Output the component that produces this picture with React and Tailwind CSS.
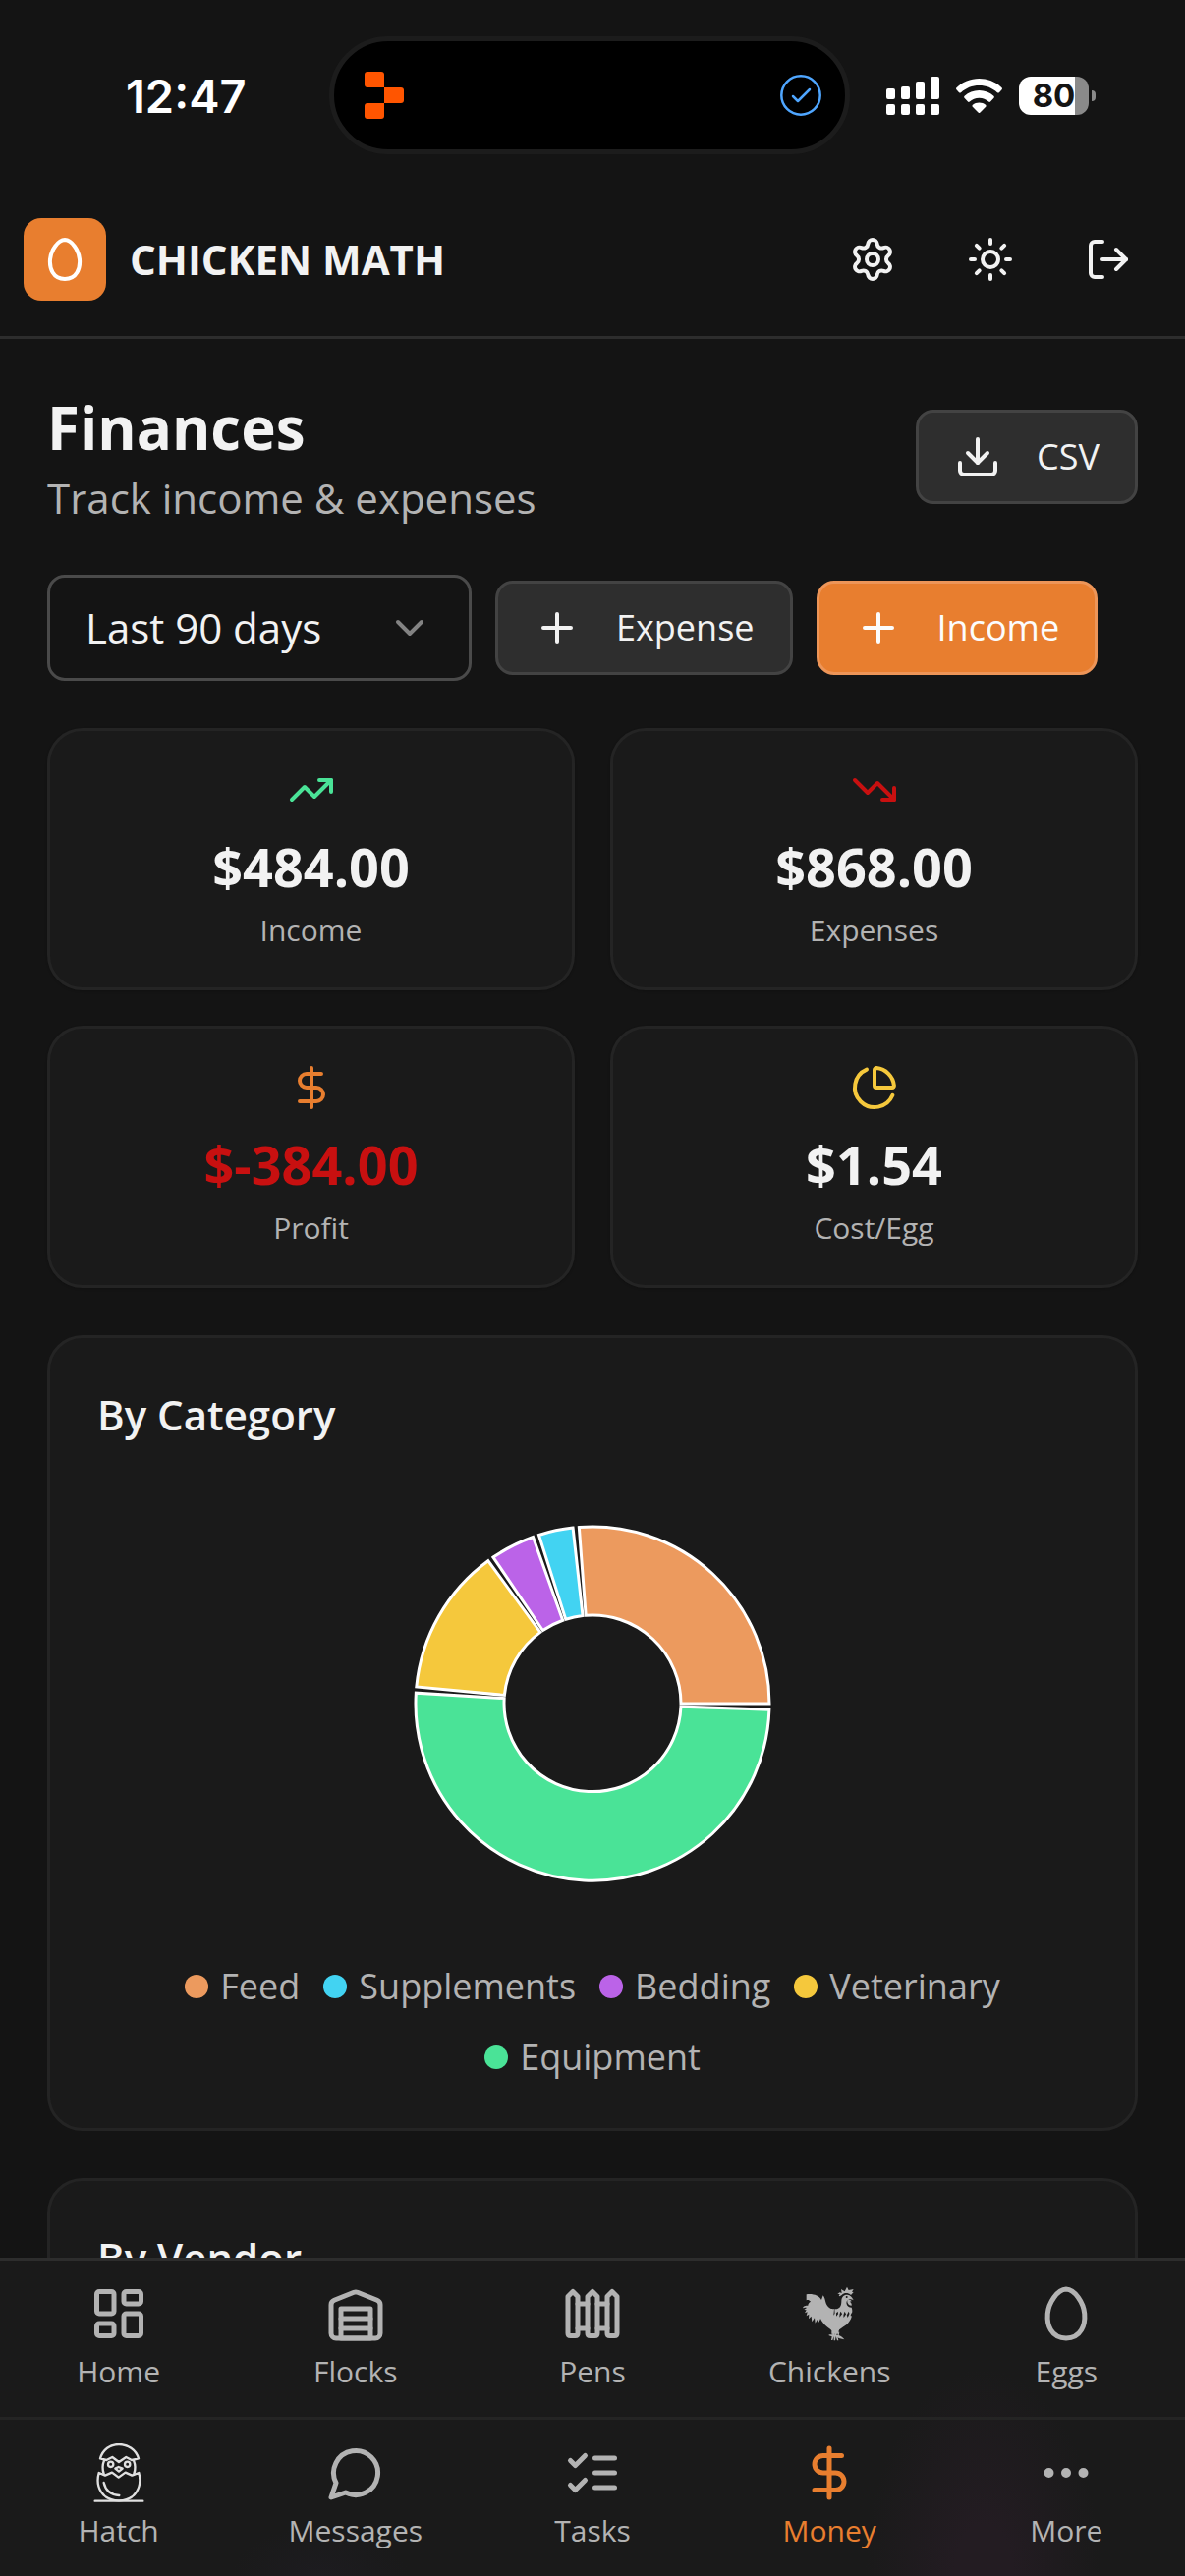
import { useState } from 'react'
import {
  ChevronDown, DollarSign, Download, Ellipsis, Fence, LayoutDashboard,
  LogOut, PieChart, Plus, Settings, Sun, TrendingDown, TrendingUp,
} from 'lucide-react'

const STATS = [
  { label: 'Income', value: '$484.00', icon: TrendingUp, iconClass: 'text-[#4ae397]', valueClass: 'text-[#f2f2f2]' },
  { label: 'Expenses', value: '$868.00', icon: TrendingDown, iconClass: 'text-[#c81010]', valueClass: 'text-[#f2f2f2]' },
  { label: 'Profit', value: '$-384.00', icon: DollarSign, iconClass: 'text-[#e87e2f]', valueClass: 'text-[#c81010]' },
  { label: 'Cost/Egg', value: '$1.54', icon: PieChart, iconClass: 'text-[#f5c83c]', valueClass: 'text-[#f2f2f2]' },
]

const CATEGORIES = [
  { name: 'Feed', amount: 234, fill: 'fill-[#ec9a5e]', dot: 'bg-[#ec9a5e]' },
  { name: 'Supplements', amount: 28, fill: 'fill-[#42d3f2]', dot: 'bg-[#42d3f2]' },
  { name: 'Bedding', amount: 36, fill: 'fill-[#bb63e8]', dot: 'bg-[#bb63e8]' },
  { name: 'Veterinary', amount: 120, fill: 'fill-[#f5c83c]', dot: 'bg-[#f5c83c]' },
  { name: 'Equipment', amount: 450, fill: 'fill-[#4ae397]', dot: 'bg-[#4ae397]' },
]

// Stroke icons that differ from the ones in the icon package
function StrokeIcon({ className, children }) {
  return (
    <svg viewBox="0 0 24 24" className={className} fill="none" stroke="currentColor" strokeWidth="2"
      strokeLinecap="round" strokeLinejoin="round" aria-hidden="true">
      {children}
    </svg>
  )
}

function EggIcon({ className }) {
  return (
    <StrokeIcon className={className}>
      <path d="M12 22c6.23-.05 7.87-5.57 7.5-10-.36-4.34-3.95-9.96-7.5-10-3.55.04-7.14 5.66-7.5 10-.37 4.43 1.27 9.95 7.5 10z" />
    </StrokeIcon>
  )
}

function WarehouseIcon({ className }) {
  return (
    <StrokeIcon className={className}>
      <path d="M22 8.35V20a2 2 0 0 1-2 2H4a2 2 0 0 1-2-2V8.35A2 2 0 0 1 3.26 6.5l8-3.2a2 2 0 0 1 1.48 0l8 3.2A2 2 0 0 1 22 8.35Z" />
      <path d="M6 18h12" />
      <path d="M6 14h12" />
      <rect width="12" height="12" x="6" y="10" />
    </StrokeIcon>
  )
}

function MessageIcon({ className }) {
  return (
    <StrokeIcon className={className}>
      <path d="M7.9 20A9 9 0 1 0 4 16.1L2 22Z" />
    </StrokeIcon>
  )
}

function TasksIcon({ className }) {
  return (
    <StrokeIcon className={className}>
      <path d="m3 17 2 2 4-4" />
      <path d="m3 7 2 2 4-4" />
      <path d="M13 6h8" />
      <path d="M13 12h8" />
      <path d="M13 18h8" />
    </StrokeIcon>
  )
}

function RoosterIcon({ className }) {
  return (
    <svg viewBox="143 135 180 180" className={className} fill="currentColor" aria-hidden="true">
      {/* comb */}
      <path d="M258 164l7-4 6 2-2-12 11 7 7-14 5 10 15-3-5 8 5 1-8 9c-9-8-20-8-28 0-4 3-6 4-9 3l3-6z" />
      {/* tail and body */}
      <path d="M163 166c20-3 38 3 46 17l5-14c9 11 5 28 19 38 5 4 12 4 15 3l-2 20 8-10 0 13 11-13-1 16 11-14 2 15 8-12 4 12 7-15 3 11 3-3c-3 16-13 27-26 35-7 5-13 8-14 12l-1 10h-21l0-10c-2-5-9-8-15-13-8-7-15-15-19-24l-5 12-3-11-8 13-2-16-8 12-2-17-8 8 1-14-8 5 3-12-8 3 5-9-7-1 8-6c-4-2-8-1-12 1 1-7 9-8 16-8 0-5 3-10 8-12-4-4-8-6-13-4z" />
      {/* head and neck */}
      <path d="M249 211c15 1 21-8 21-24 0-14 8-21 18-20 9 1 15 7 19 17-5-3-10-4-15-2-6 2-8 8-6 14 2 7 7 10 15 10 2 5 2 9 2 14l-6 10-5-12-6 12-6-12-5 13-7-13-7 12-2-12-9 9z" />
      <path d="M288 184c6-4 12-1 13 3l-6 1c5 3 7 7 6 12-8 1-14-6-13-16z" />
      <circle cx="286" cy="174" r="3" className="fill-[#1a1a1a]" />
      {/* feet */}
      <path d="M243 281h4l2 9 2-9h4l0 9h4l2-9h3l-2 10c7 3 13 7 17 13l-17-4-3-3 2 10h-4l-4-13-2 13h-4l0-13-4 12h-4l2-11-9-3v-3h11z" />
    </svg>
  )
}

function HatchIcon({ className }) {
  return (
    <svg viewBox="272 621 180 180" className={className} fill="none" stroke="currentColor" strokeWidth="7"
      strokeLinecap="round" strokeLinejoin="round" aria-hidden="true">
      {/* top of the shell */}
      <path d="M305 667c8-27 30-43 57-43s52 16 60 43l-21 5-17-9-22 15-20-15-18 9z" />
      {/* chick */}
      <path d="M317 673c-6 15-6 27-1 41M407 673c6 15 6 27 1 41" />
      <circle cx="337" cy="685" r="8" />
      <circle cx="388" cy="685" r="8" />
      <path d="M351 698l10-5 12 5-11 9z" />
      {/* lower shell and ground */}
      <path d="M301 711l19 8 21-9 20 15 21-15 20 9 21-8c11 43-11 85-61 85s-73-42-61-85z" />
      <path d="M316 741c5 23 21 37 47 39" />
      <path d="M289 797h146" />
    </svg>
  )
}

const NAV_ROWS = [
  [
    { label: 'Home', icon: LayoutDashboard },
    { label: 'Flocks', icon: WarehouseIcon },
    { label: 'Pens', icon: Fence },
    { label: 'Chickens', icon: RoosterIcon },
    { label: 'Eggs', icon: EggIcon },
  ],
  [
    { label: 'Hatch', icon: HatchIcon, iconClass: 'text-[#e0e0e0]' },
    { label: 'Messages', icon: MessageIcon },
    { label: 'Tasks', icon: TasksIcon },
    { label: 'Money', icon: DollarSign, active: true },
    { label: 'More', icon: Ellipsis },
  ],
]

function StatusBar() {
  return (
    <div className="grid h-[186px] shrink-0 grid-cols-[335fr_530fr_341fr] items-start pt-[37px]">
      <div className="flex h-[120px] items-center pl-32 font-['Inter',sans-serif] text-[47px] leading-none font-semibold text-white">
        12:47
      </div>
      <div className="flex h-[120px] items-center justify-between rounded-full border-5 border-[#1c1c1c] bg-black pr-6 pl-[31px]">
        <svg viewBox="0 0 40 48" className="h-12 w-10 fill-[#ff5500]" aria-hidden="true">
          <path d="M3 0h14a3 3 0 0 1 3 3v13H3a3 3 0 0 1-3-3V3a3 3 0 0 1 3-3z" />
          <path d="M20 16h17a3 3 0 0 1 3 3v10a3 3 0 0 1-3 3H20z" />
          <path d="M3 32h17v13a3 3 0 0 1-3 3H3a3 3 0 0 1-3-3V35a3 3 0 0 1 3-3z" />
        </svg>
        <svg viewBox="0 0 42 42" className="size-[42px] fill-none stroke-[#4fa6ff]" strokeWidth="2.500" strokeLinecap="round" strokeLinejoin="round" aria-hidden="true">
          <circle cx="21" cy="21" r="19.700" />
          <path d="M13 22l5 5 12-12" />
        </svg>
      </div>
      <div className="flex h-[120px] items-center gap-[17px] pl-[37px]">
        <svg viewBox="0 0 54 39" className="h-[39px] w-[54px] fill-white" aria-hidden="true">
          <rect x="0" y="12" width="9" height="11" rx="2" />
          <rect x="15" y="10" width="9" height="13" rx="2" />
          <rect x="30" y="5" width="9" height="18" rx="2" />
          <rect x="45" y="0" width="9" height="23" rx="2" />
          <rect x="0" y="28" width="9" height="11" rx="2" />
          <rect x="15" y="28" width="9" height="11" rx="2" />
          <rect x="30" y="28" width="9" height="11" rx="2" />
          <rect x="45" y="28" width="9" height="11" rx="2" />
        </svg>
        <svg viewBox="0 0 47 35" className="h-[35px] w-[47px] fill-white" aria-hidden="true">
          <path d="M23.500 0C32.400 0 40.500 3.500 46.500 9.200c.6.600.6 1.400.1 2l-2.700 3c-.5.500-1.300.5-1.900 0C37 9.600 30.600 7 23.500 7S10 9.600 5 14.200c-.6.500-1.400.5-1.900 0l-2.700-3c-.5-.6-.5-1.400.1-2C6.500 3.500 14.600 0 23.500 0z" />
          <path d="M23.500 12c5.700 0 10.900 2.200 14.900 5.800.6.600.6 1.400.1 2l-3.500 3.700c-.5.500-1.200.5-1.800 0-2.600-2.300-6-3.700-9.700-3.700s-7.100 1.400-9.700 3.700c-.6.500-1.300.5-1.800 0l-3.500-3.700c-.5-.6-.5-1.400.1-2C12.600 14.200 17.800 12 23.500 12z" />
          <path d="M23.500 24.500c2.500 0 4.800.9 6.600 2.300.6.500.6 1.300.1 1.900l-5.700 5.900c-.6.600-1.400.6-2 0l-5.700-5.900c-.5-.6-.5-1.400.1-1.900 1.800-1.400 4.100-2.300 6.600-2.300z" />
        </svg>
        <div className="flex items-center gap-[3px]">
          <div className="flex h-[39px] w-[71px] items-center justify-center rounded-[12px] bg-linear-to-r from-white from-80% to-[#8a8a8a] to-80% font-['Inter',sans-serif] text-[33px] leading-none font-bold text-[#141414]">
            80
          </div>
          <div className="h-[11px] w-1 rounded-r-full bg-[#8a8a8a]" />
        </div>
      </div>
    </div>
  )
}

function HeaderButton({ label, icon: Icon }) {
  return (
    <button type="button" aria-label={label} className="flex size-[108px] items-center justify-center rounded-[18px] text-[#f2f2f2]">
      <Icon className="size-12" />
    </button>
  )
}

function ActionButton({ icon: Icon, primary, children }) {
  const colors = primary
    ? 'border-[#ed9558] bg-[#e87e2f] text-[#fcfcfc]'
    : 'border-[#434343] bg-[#2e2e2e] text-[#f2f2f2]'
  return (
    <button type="button" className={`flex h-24 shrink-0 items-center gap-9 rounded-[18px] border-3 px-9 text-[36px] leading-[60px] font-medium ${colors}`}>
      <Icon className="size-12" />
      {children}
    </button>
  )
}

function StatCard({ stat }) {
  const Icon = stat.icon
  return (
    <div className="rounded-[36px] border-3 border-[#242424] bg-[#1a1a1a] p-9 text-center shadow-sm">
      <Icon className={`mx-auto mb-3 size-12 ${stat.iconClass}`} />
      <p className={`text-[54px] leading-[84px] font-bold ${stat.valueClass}`}>{stat.value}</p>
      <p className="text-[30px] leading-[45px] text-[#b3b3b3]">{stat.label}</p>
    </div>
  )
}

const GAP = 2
const CENTER = 240

function point(radius, angle) {
  const rad = (angle * Math.PI) / 180
  return `${(CENTER + radius * Math.cos(rad)).toFixed(2)} ${(CENTER - radius * Math.sin(rad)).toFixed(2)}`
}

function CategoryDonut() {
  const total = CATEGORIES.reduce((sum, c) => sum + c.amount, 0)
  const sweep = 360 - GAP * CATEGORIES.length
  let angle = 0

  return (
    <svg viewBox="0 0 480 480" className="mx-auto size-[480px]" role="img" aria-label="Expenses by category">
      {CATEGORIES.map(c => {
        const start = angle
        const end = start + (c.amount / total) * sweep
        angle = end + GAP
        const large = end - start > 180 ? 1 : 0
        return (
          <path
            key={c.name}
            className={`stroke-white ${c.fill}`}
            strokeWidth="3"
            d={`M${point(180, start)}A180 180 0 ${large} 0 ${point(180, end)}L${point(90, end)}A90 90 0 ${large} 1 ${point(90, start)}Z`}
          />
        )
      })}
    </svg>
  )
}

function BottomNav() {
  return (
    <nav className="shrink-0 border-t-3 border-[#2d2d2d] bg-[#1a1a1a] bg-[radial-gradient(120px_210px_at_83%_100%,#231c22_25%,transparent),radial-gradient(90px_50px_at_27%_100%,#1d1c20,transparent)]">
      {NAV_ROWS.map((row, i) => (
        <div key={i} className={`grid grid-cols-5 ${i > 0 ? 'border-t-3 border-[#242424]' : ''}`}>
          {row.map(({ label, icon: Icon, iconClass, active }) => (
            <a key={label} href={`#${label.toLowerCase()}`} aria-current={active ? 'page' : undefined}
              className={`flex flex-col items-center gap-[6px] py-6 text-[30px] leading-[45px] font-medium ${active ? 'text-[#e87e2f]' : 'text-[#b3b3b3]'}`}>
              <Icon className={`size-[60px] ${iconClass || ''}`} />
              {label}
            </a>
          ))}
        </div>
      ))}
    </nav>
  )
}

export default function App() {
  const [range, setRange] = useState('90')

  return (
    <div className="flex h-screen flex-col bg-[#141414] font-['Open_Sans',sans-serif] text-[#f2f2f2]">
      <StatusBar />

      <header className="flex shrink-0 items-center justify-between border-b-3 border-[#2d2d2d] p-6">
        <div className="flex items-center gap-6">
          <div className="flex size-[84px] items-center justify-center rounded-[18px] bg-[#e87e2f] text-white">
            <EggIcon className="size-12" />
          </div>
          <span className="text-[42px] leading-[60px] font-bold">CHICKEN MATH</span>
        </div>
        <div className="flex gap-3">
          <HeaderButton label="Settings" icon={Settings} />
          <HeaderButton label="Toggle theme" icon={Sun} />
          <HeaderButton label="Log out" icon={LogOut} />
        </div>
      </header>

      <main className="flex min-h-0 flex-1 flex-col gap-12 overflow-y-auto p-12 pb-0 [scrollbar-width:none]">
        <div className="flex items-center justify-between">
          <div>
            <h1 className="text-[60px] leading-[84px] font-bold">Finances</h1>
            <p className="text-[42px] leading-[60px] text-[#b3b3b3]">Track income &amp; expenses</p>
          </div>
          <ActionButton icon={Download}>CSV</ActionButton>
        </div>

        {/* Filters */}
        <div className="flex items-center gap-6">
          <div className="relative w-[432px]">
            <select aria-label="Date range" value={range} onChange={e => setRange(e.target.value)}
              className="h-[108px] w-full appearance-none rounded-[18px] border-3 border-[#4a4a4a] bg-[#141414] px-9 text-[42px] leading-[60px] text-[#f2f2f2]">
              <option value="30">Last 30 days</option>
              <option value="90">Last 90 days</option>
              <option value="365">Last year</option>
            </select>
            <ChevronDown className="pointer-events-none absolute inset-y-0 right-[39px] my-auto size-12 text-[#838383]" />
          </div>
          <ActionButton icon={Plus}>Expense</ActionButton>
          <ActionButton icon={Plus} primary>Income</ActionButton>
        </div>

        <div className="grid grid-cols-2 gap-9">
          {STATS.map(s => <StatCard key={s.label} stat={s} />)}
        </div>

        <section className="flex shrink-0 flex-col gap-6 rounded-[36px] border-3 border-[#242424] bg-[#1a1a1a] p-12">
          <h2 className="text-[42px] leading-[60px] font-semibold">By Category</h2>
          <CategoryDonut />
          <ul className="flex flex-wrap justify-center gap-6 text-[36px] leading-[48px] text-[#b3b3b3]">
            {CATEGORIES.map(c => (
              <li key={c.name} className="flex items-center gap-3">
                <span className={`size-6 rounded-full ${c.dot}`} />
                {c.name}
              </li>
            ))}
          </ul>
        </section>

        <section className="h-[810px] shrink-0 rounded-[36px] border-3 border-[#242424] bg-[#1a1a1a] p-12">
          <h2 className="text-[42px] leading-[60px] font-semibold">By Vendor</h2>
        </section>
      </main>

      <BottomNav />
    </div>
  )
}
